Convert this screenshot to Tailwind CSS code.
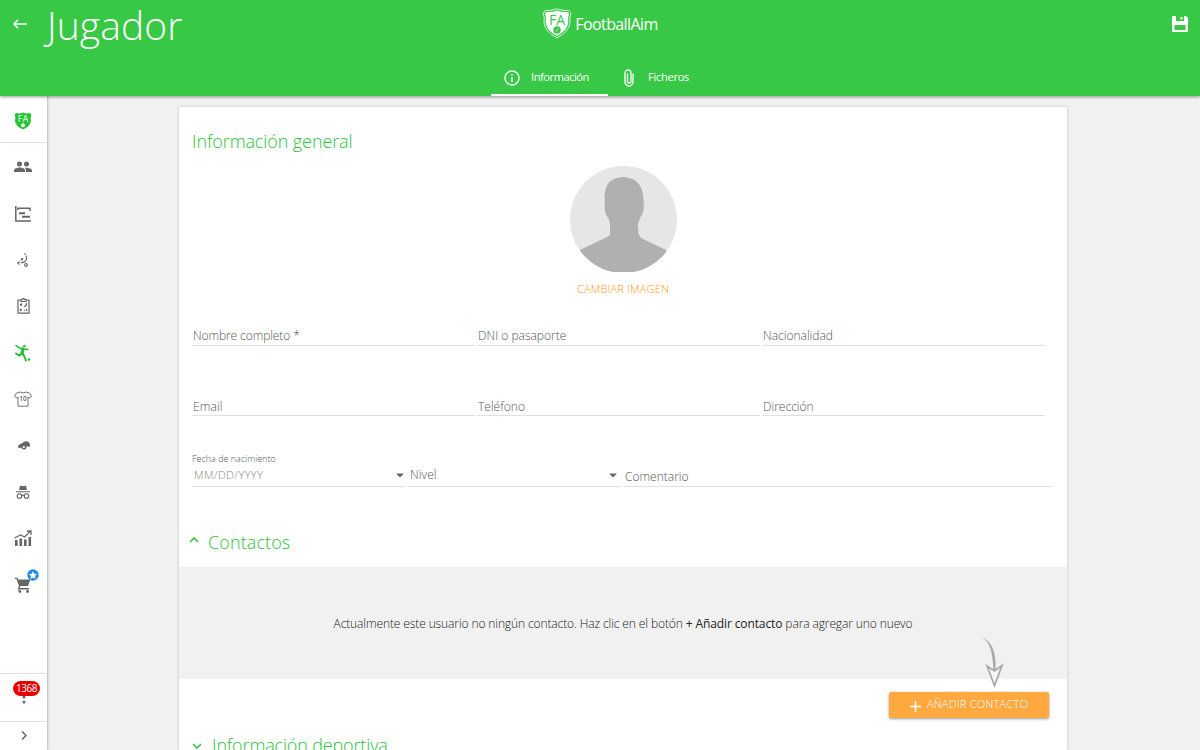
<!DOCTYPE html>
<html lang="es">
<head>
    <meta charset="UTF-8">
    <title>FootballAim - Jugador</title>
    <script src="https://cdn.jsdelivr.net/npm/@tailwindcss/browser@4"></script>
</head>
<body class="h-screen overflow-hidden flex flex-col bg-[#f1f1f1] font-['Open_Sans','Noto_Sans',sans-serif] font-light text-[#222]">

    <header class="relative z-10 h-24 shrink-0 bg-[#37c846] text-white shadow-[0_1px_3px_rgba(0,0,0,0.4)] flex flex-col justify-between">
        <div class="h-[52px] grid grid-cols-3 items-center">
            <div class="flex items-center pl-[13px]">
                <svg class="w-[14px] h-[10px] -mt-1" viewBox="0 0 14 10" fill="none" stroke="currentColor" stroke-width="1.500"><path d="M14 5H1M5 .8L1 5l4 4.200"/></svg>
                <h1 class="ml-[20px] -mt-[3px] text-[39px] leading-[52px] tracking-[0.1px]">Jugador</h1>
            </div>
            <div class="flex items-center justify-center gap-[3px] -mt-[5px]">
                <svg class="w-[30px] h-[31px]" viewBox="0 0 30 31">
                    <path d="M3 2.500Q9 3 15 .8 21 3 27 2.500L29 6Q27 9 28 14 28 23 15 30 2 23 2 14 3 9 1 6Z" fill="none" stroke="#fff" stroke-width=".8"/>
                    <path d="M4 4Q10 4.500 15 2.500 20 4.500 26 4L27 6Q25.500 10 26.300 14 26 22 15 28 4 22 3.700 14 4.500 10 3 6Z" fill="#fff"/>
                    <text x="15" y="16.500" text-anchor="middle" font-size="14" font-weight="400" fill="#37c846">FA</text>
                    <circle cx="15" cy="22" r="3.700" fill="#37c846"/>
                    <path d="M14 23.500l2-3" fill="none" stroke="#fff" stroke-width=".8"/>
                </svg>
                <span class="text-[16px] leading-5 font-normal tracking-[-0.6px]">FootballAim</span>
            </div>
            <div class="flex justify-end pr-3 -mt-1">
                <svg class="w-4 h-4" viewBox="0 0 16 16" fill="#fff"><path fill-rule="evenodd" d="M1 0H4V5H12V0H14L16 2V15Q16 16 15 16H1Q0 16 0 15V1Q0 0 1 0ZM2.500 9V14H13.500V9Z"/><path d="M8.500 1h2v2.500h-2z"/></svg>
            </div>
        </div>
        <nav class="flex h-[38px] ml-[491px] text-[11px] font-normal">
            <a class="w-[117px] border-b-2 border-white flex items-center pt-[3px] pl-[13px] gap-[11px]">
                <svg class="w-4 h-4" viewBox="0 0 16 16" fill="none" stroke="currentColor" stroke-width="1.400"><circle cx="8" cy="8" r="7"/><path d="M8 7v5M8 4v1.500"/></svg>
                <span class="tracking-[-0.4px]">Información</span>
            </a>
            <a class="flex items-center pt-[3px] pl-[16px] gap-[14px] border-b-2 border-transparent">
                <svg class="w-[10px] h-[18px]" viewBox="0 0 10 18" fill="none" stroke="currentColor" stroke-width="1.300"><path d="M9 4.500V13a4 4 0 0 1-8 0V4a3 3 0 0 1 6 0v8.500a1.700 1.700 0 0 1-3.500 0V4.500"/></svg>
                <span class="tracking-[-0.25px]">Ficheros</span>
            </a>
        </nav>
    </header>

    <div class="flex flex-1 min-h-0">
        <!-- Menú lateral -->
        <aside class="w-[47px] shrink-0 bg-white shadow-[1px_0_2px_rgba(0,0,0,0.25)] flex flex-col text-[#666]">
            <div class="h-[47px] shrink-0 border-b border-[#e0e0e0] flex items-center justify-center pr-px">
                <svg class="w-[18px] h-[18px] mt-[3px]" viewBox="0 0 18 18">
                    <path d="M2 1Q6 2 9 .5 12 2 16 1L17.500 3Q16 6 17 9 16.500 14 9 17.500 1.500 14 1 9 2 6 .5 3Z" fill="#22c433"/>
                    <text x="9" y="10" text-anchor="middle" font-size="9" font-weight="400" fill="#fff">FA</text>
                    <circle cx="9" cy="13.300" r="2" fill="#fff"/>
                </svg>
            </div>
            <div class="flex flex-col pt-px pr-px">
                <a class="h-[46.400px] flex items-center justify-center">
                    <svg class="w-[18px] h-3" viewBox="0 0 18 12" fill="currentColor"><circle cx="5.500" cy="3" r="2.500"/><circle cx="12.500" cy="3" r="2.500"/><path d="M0 11V9.500C0 7.500 3.500 6.600 5.800 6.600S11 7.500 11 9.500V11ZM12 11V9.500Q12 8 10.800 6.800C13 6.300 18 7.200 18 9.500V11Z"/></svg>
                </a>
                <a class="h-[46.400px] flex items-center justify-center">
                    <svg class="w-4 h-4" viewBox="0 0 16 16" fill="none" stroke="currentColor" stroke-width="1.500"><path d="M.8 0V15H16M3 4V2.200H15V5"/><path d="M4 7.200h6M7 10.800h8" stroke-width="2"/></svg>
                </a>
                <a class="h-[46.400px] flex items-center justify-center">
                    <svg class="w-3 h-[14px]" viewBox="0 0 12 14" fill="none" stroke="currentColor" stroke-width="1.100"><path d="M7 1h2M9 2.500q1.500 3.500-1 6Q6 10 3.500 9.500M2.500 8.500L.5 10 2.500 11.500M4 5.500l2 1.500M6 5L4 7.500"/><circle cx="9" cy="12" r="1.400"/></svg>
                </a>
                <a class="h-[46.400px] flex items-center justify-center">
                    <svg class="w-[13px] h-4" viewBox="0 0 13 16" fill="none" stroke="currentColor" stroke-width="1.200"><path d="M4 2H1v13.200h11V2H9M4 3.500V1.500h1.500a1 1 0 0 1 2 0H9v2Z"/><path d="M3 6l2 1.500M5 5.500L3.500 8M7 8.500Q10 8 9.500 5M3 11l1.500 2M4.500 11L3 13M7 12.500h1M9.500 11v2"/></svg>
                </a>
                <a class="h-[46.400px] flex items-center justify-center text-[#1fbe30]">
                    <svg class="w-4 h-[18px]" viewBox="0 0 16 18" fill="none" stroke="currentColor" stroke-linecap="round"><circle cx="9.300" cy="2" r="1.300" fill="currentColor" stroke="none"/><path d="M1 1.500L4 3.700 8 5 13 5.500" stroke-width="1.500"/><path d="M8 5L7 9.500" stroke-width="3.200"/><path d="M6.500 9.500L4.500 11.500 1 9.500M8 10L9.500 13 11 16.500" stroke-width="1.900"/><circle cx="14" cy="15.500" r="1.300" fill="currentColor" stroke="none"/></svg>
                </a>
                <a class="h-[46.400px] flex items-center justify-center">
                    <svg class="w-[18px] h-4" viewBox="0 0 18 16" fill="none" stroke="currentColor" stroke-width=".9"><path d="M6 1Q9 3 12 1L15.500 2 17.500 5.500 15 7 14 6V15.200H4V6L3 7 .5 5.500 2.500 2Z"/><text x="9" y="9.800" text-anchor="middle" font-size="6.500" font-weight="600" fill="currentColor" stroke="none">10</text></svg>
                </a>
                <a class="h-[46.400px] flex items-center justify-center pl-px">
                    <svg class="w-3 h-[9px]" viewBox="0 0 12 9" fill="currentColor"><path fill-rule="evenodd" d="M4 2.300Q6 0 8.500 .2 12 .8 12 4.200L11.300 6 8.600 5.200Q8.500 8.500 5.800 8.600 3.500 8.500 3.200 6.300L2 7.300Q0 7.500 0 5.300 .8 3.300 4 2.300ZM5.800 5a1 1 0 1 0 .1 0Z"/></svg>
                </a>
                <a class="h-[46.400px] flex items-center justify-center">
                    <svg class="w-[14px] h-[14px]" viewBox="0 0 14 14" fill="none" stroke="currentColor" stroke-width="1.100"><path d="M3 5L4 .8Q7 1.300 10 .8L11 5Z" fill="currentColor" stroke="none"/><path d="M0 6.800h14M6 10.500q1-.8 2 0"/><circle cx="3.500" cy="11" r="2.300"/><circle cx="10.500" cy="11" r="2.300"/></svg>
                </a>
                <a class="h-[46.400px] flex items-center justify-center">
                    <svg class="w-[18px] h-4" viewBox="0 0 18 16" fill="currentColor"><path d="M1 10h2.600v6H1zM5.500 8.500h2.600V16H5.500zM10 9.500h2.600V16H10zM14.500 7h2.600v9h-2.600z"/><path d="M.5 8L6.500 5 10.500 7 16 1.500M13 1h4v4" fill="none" stroke="currentColor" stroke-width="1.300"/></svg>
                </a>
                <a class="relative h-[46.400px] flex items-center justify-center">
                    <svg class="w-4 h-4" viewBox="0 0 16 16" fill="currentColor"><path d="M0 .7h2.500L3.200 2.500H15.500L13 9H5.500L4.500 11H14v1.500H2.500L4 9 1.500 2H0Z"/><circle cx="4.800" cy="14.500" r="1.400"/><circle cx="12.500" cy="14.500" r="1.400"/></svg>
                    <svg class="absolute left-[27px] top-[7px] w-3 h-3" viewBox="0 0 12 12"><circle cx="6" cy="6" r="5.700" fill="#2188e8"/><path d="M6 2l1.200 2.700 2.900.3L8 7l.6 2.900L6 8.400 3.400 9.900 4 7 1.900 5l2.900-.3Z" fill="#fff"/></svg>
                </a>
            </div>
            <div class="relative mt-auto h-12 shrink-0 border-t border-[#e0e0e0] flex items-center justify-center">
                <svg class="w-1 h-4 -mt-px" viewBox="0 0 4 16" fill="currentColor"><circle cx="2" cy="3" r="1.500"/><circle cx="2" cy="8" r="1.500"/><circle cx="2" cy="13" r="1.500"/></svg>
                <span class="absolute left-[13px] top-[7px] w-[27px] h-[15px] rounded-full bg-[#e80000] text-white text-[10px] leading-[15px] tracking-[-0.5px] font-normal text-center">1368</span>
            </div>
            <div class="h-[29px] shrink-0 border-t border-[#e0e0e0] flex items-center justify-center">
                <svg class="w-[6px] h-[9px] -mt-[2px]" viewBox="0 0 6 9" fill="none" stroke="currentColor" stroke-width="1.500"><path d="M1 .5l4 4-4 4"/></svg>
            </div>
        </aside>

        <main class="ml-[132px] mt-[11px] w-[888px] shrink-0 bg-white shadow-[0_0_3px_rgba(0,0,0,0.2)]">
            <section class="h-[460px] pl-[13px] pt-[22px]">
                <h2 class="text-[18px] leading-6 text-[#2ac23a] tracking-[-0.1px]">Información general</h2>

                <div class="mr-[13px] mt-[13px] flex flex-col items-center">
                    <svg class="w-[107px] h-[106px]" viewBox="0 0 107 106">
                        <defs><clipPath id="avatar"><circle cx="53.500" cy="53.500" r="53.500"/></clipPath></defs>
                        <g clip-path="url(#avatar)">
                            <rect width="107" height="107" fill="#e6e6e6"/>
                            <path d="M40 68V58L38.500 52Q35.500 50 34.500 42 35 37 34.500 30 35 17 44 13L49 11.500 54 11 61 12.500Q72 16 73.500 32L73.800 41Q73 49 70.500 51L68 58 68.500 68 71 72 96 84V106H10V84L37 71Q40 70 40 68Z" fill="#b0b0b0"/>
                        </g>
                    </svg>
                    <a class="mt-[9px] text-[11px] leading-[16px] tracking-[0.2px] text-[#ff9510]">CAMBIAR IMAGEN</a>
                </div>

                <div class="mt-[29px] grid grid-cols-3 w-[853px] gap-x-[2px] gap-y-[50px] text-[12px] leading-5 text-[#555]">
                    <div class="h-5 border-b border-[#e0e0e0] pl-[1px] tracking-[-0.1px]">Nombre completo *</div>
                    <div class="h-5 border-b border-[#e0e0e0] pl-[1px]">DNI o pasaporte</div>
                    <div class="h-5 border-b border-[#e0e0e0] pl-[1px]">Nacionalidad</div>
                    <div class="h-5 border-b border-[#e0e0e0] pl-[1px] pt-px tracking-[0.1px]">Email</div>
                    <div class="h-5 border-b border-[#e0e0e0] pl-[1px] pt-px">Teléfono</div>
                    <div class="h-5 border-b border-[#e0e0e0] pl-[1px] pt-px">Dirección</div>
                </div>

                <div class="mt-9 flex items-end gap-[3px] text-[12px] leading-5 text-[#555]">
                    <div class="w-[213px] border-b border-[#e0e0e0] h-[35px]">
                        <div class="text-[9px] leading-[14px]">Fecha de nacimiento</div>
                        <div class="flex items-center justify-between pl-[2px] pr-[1px] h-[18px]">
                            <span class="text-[11px] tracking-[0.4px] text-[#888]">MM/DD/YYYY</span>
                            <svg class="w-2 h-[5px]" viewBox="0 0 8 5" fill="#666"><path d="M0 .5h8L4 4.500Z"/></svg>
                        </div>
                    </div>
                    <div class="w-[213px] h-[35px] border-b border-[#e0e0e0] pt-[14px]">
                        <div class="flex items-center justify-between pl-[2px] pr-1 h-[18px]">
                            <span class="tracking-[0.1px]">Nivel</span>
                            <svg class="w-2 h-[5px]" viewBox="0 0 8 5" fill="#666"><path d="M0 .5h8L4 4.500Z"/></svg>
                        </div>
                    </div>
                    <div class="w-[428px] h-[35px] border-b border-[#e0e0e0] pl-[1px] pt-[15px]">Comentario</div>
                </div>

                <h2 class="mt-[43px] flex items-center gap-[9px] -ml-[3px] text-[18px] leading-6 text-[#2ac23a]">
                    <svg class="w-[10px] h-[7px] -mt-[5px]" viewBox="0 0 10 7" fill="none" stroke="currentColor" stroke-width="1.500"><path d="M1 6l4-4 4 4"/></svg>
                    <span class="tracking-[0.1px]">Contactos</span>
                </h2>
            </section>

            <section class="relative h-28 bg-[#f1f1f1] flex items-center justify-center text-[12px] tracking-[-0.11px]">
                <p class="pt-px">Actualmente este usuario no ningún contacto. Haz clic en el botón <span class="font-normal text-[#222]">+ Añadir contacto</span> para agregar uno nuevo</p>
                <!-- Flecha hacia el botón -->
                <svg class="absolute left-[799px] top-[69px] w-7 h-[52px]" viewBox="0 0 28 52">
                    <path d="M1 .5Q15 3 15.300 35.500H17.600Q19 4 1 .5Z" fill="#aaa"/>
                    <path d="M9 30L16.500 35 24 29.500 16.500 49.500Z" fill="#f7f7f7" stroke="#a8a8a8" stroke-width="1.700"/>
                </svg>
            </section>

            <div class="pt-[13px] pr-[18px] flex justify-end">
                <button class="w-[160px] h-[26px] rounded-[2px] bg-[#ffa940] text-white text-[11px] font-light shadow-[0_1px_3px_rgba(0,0,0,0.4)] flex items-center justify-center gap-[6px]">
                    <svg class="w-[11px] h-[11px] mt-[2px]" viewBox="0 0 11 11" stroke="#fff" stroke-width="1.500"><path d="M5.500 0v11M0 5.500h11"/></svg>
                    <span class="-mt-px tracking-[0.25px]">AÑADIR CONTACTO</span>
                </button>
            </div>

            <h2 class="mt-[15px] pl-[13px] flex items-center gap-[10px] text-[18px] leading-6 text-[#2ac23a]">
                <svg class="w-[10px] h-[7px] mt-[3px]" viewBox="0 0 10 7" fill="none" stroke="currentColor" stroke-width="1.500"><path d="M1 1l4 4 4-4"/></svg>
                <span class="tracking-[-0.15px]">Información deportiva</span>
            </h2>
        </main>
    </div>
</body>
</html>
